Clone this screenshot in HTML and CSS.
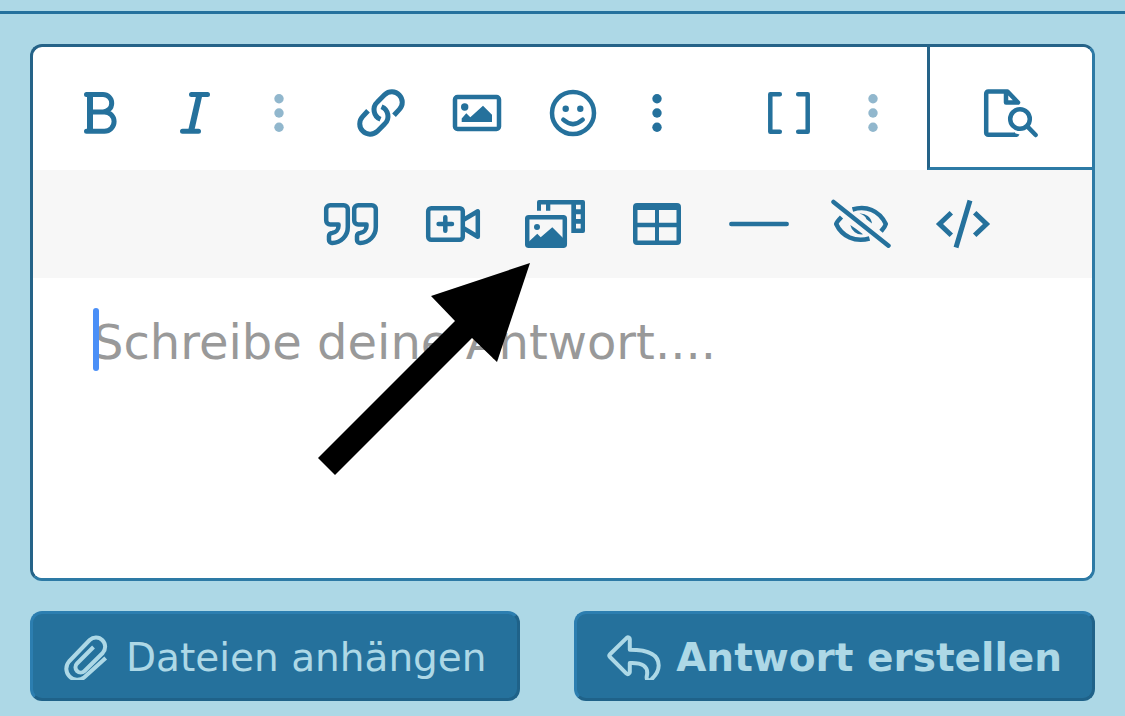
FILE: index.html
```html
<!DOCTYPE html>
<html lang="de">
<head>
    <meta charset="UTF-8">
    <title>Antwort erstellen</title>
    <link rel="stylesheet" href="styles.css">
</head>
<body>

    <form class="reply">
        <div class="editor">
            <div class="toolbar">
                <div class="toolbar__group">
                    <button type="button" class="tool" aria-label="Fett">
                        <svg class="icon icon--bold" viewBox="0 0 60 60"><path d="M17.5 11.5H34a8.7 8.7 0 0 1 0 17.4H21M34 28.9h1.4a9.7 9.7 0 0 1 0 19.4H17.5"/><path class="thick" d="M21 11.3V48.5"/></svg>
                    </button>
                    <button type="button" class="tool" aria-label="Kursiv">
                        <svg class="icon icon--bold" viewBox="0 0 60 60"><path d="M26.5 11.5H42.5M17.5 48.3H33.5"/><path class="thick" d="M34.5 11.3L26 48.5"/></svg>
                    </button>
                    <button type="button" class="tool tool--more" aria-label="Mehr Textoptionen" disabled>
                        <svg class="icon icon--dots" viewBox="0 0 24 60"><circle cx="12" cy="15.7" r="4.7"/><circle cx="12" cy="30" r="4.7"/><circle cx="12" cy="44.3" r="4.7"/></svg>
                    </button>
                </div>
                <div class="toolbar__group">
                    <button type="button" class="tool" aria-label="Link">
                        <svg class="icon icon--bold icon--butt" viewBox="0 0 60 60"><path d="M43 32.3L48.4 26.4A10.4 10.4 0 0 0 33.8 11.6L26.4 19A10.4 10.4 0 0 0 29.5 36.3"/><path d="M17 27.7L11.6 33.6A10.4 10.4 0 0 0 26.2 48.4L33.6 41A10.4 10.4 0 0 0 30.5 23.7"/></svg>
                    </button>
                    <button type="button" class="tool" aria-label="Bild">
                        <svg class="icon" viewBox="0 0 60 60"><rect x="8" y="14" width="44" height="32" rx="2.5"/><circle class="fill" cx="17.7" cy="24" r="3.7"/><path class="fill" d="M14.7 39V35.5L19.3 30.3L23.3 34.3L36 22.7L45 31.7V39z"/></svg>
                    </button>
                    <button type="button" class="tool" aria-label="Smileys">
                        <svg class="icon" viewBox="0 0 60 60"><circle cx="30" cy="30" r="21"/><circle class="fill" cx="22.7" cy="25.7" r="3.2"/><circle class="fill" cx="37.3" cy="25.7" r="3.2"/><path d="M20.3 36.7Q30 45.5 39.7 36.7"/></svg>
                    </button>
                    <button type="button" class="tool tool--more" aria-label="Mehr einfügen">
                        <svg class="icon icon--dots" viewBox="0 0 24 60"><circle cx="12" cy="15.7" r="4.7"/><circle cx="12" cy="30" r="4.7"/><circle cx="12" cy="44.3" r="4.7"/></svg>
                    </button>
                </div>
                <div class="toolbar__group toolbar__group--far">
                    <button type="button" class="tool" aria-label="BBCode">
                        <svg class="icon" viewBox="0 0 60 60"><path d="M20.8 11.3H11.3V48.7H20.8M39.2 11.3H48.7V48.7H39.2"/></svg>
                    </button>
                    <button type="button" class="tool tool--more" aria-label="Mehr" disabled>
                        <svg class="icon icon--dots" viewBox="0 0 24 60"><circle cx="12" cy="15.7" r="4.7"/><circle cx="12" cy="30" r="4.7"/><circle cx="12" cy="44.3" r="4.7"/></svg>
                    </button>
                </div>
                <button type="button" class="preview" aria-label="Vorschau">
                    <svg class="icon" viewBox="0 0 60 60"><path class="cut" d="M34 51.7H7.2a2 2 0 0 1-2-2V10.5a2 2 0 0 1 2-2H26.5L37 19.5H25V8.5"/><path class="fill" d="M33 49.4Q35.5 51 38.5 51.5Q37.5 54 35 54H33z"/><circle cx="39" cy="36" r="9.8"/><path d="M46.5 43.7L54.7 52"/></svg>
                </button>
            </div>

            <div class="toolbar-more">
                <button type="button" class="tool tool--wide" aria-label="Zitat">
                    <svg class="icon" viewBox="0 0 60 60"><path d="M26.8 15.2a4 4 0 0 0-4-4H9.2a4 4 0 0 0-4 4V26.5a4 4 0 0 0 4 4H17.5V32a7 7 0 0 1-6.5 7a3 3 0 0 0-3 3V46a3 3 0 0 0 3.2 3A15.8 15.8 0 0 0 26.8 33z"/><path d="M54.8 15.2a4 4 0 0 0-4-4H37.2a4 4 0 0 0-4 4V26.5a4 4 0 0 0 4 4H45.5V32a7 7 0 0 1-6.5 7a3 3 0 0 0-3 3V46a3 3 0 0 0 3.2 3A15.8 15.8 0 0 0 54.8 33z"/></svg>
                </button>
                <button type="button" class="tool tool--wide" aria-label="Medien">
                    <svg class="icon" viewBox="0 0 60 60"><rect x="5.2" y="14.2" width="34.6" height="31.6" rx="3"/><path d="M22.3 23.3V36.7M15.6 30H29M41 25.5L54.8 17.3V42.7L41 34.5"/></svg>
                </button>
                <button type="button" class="tool tool--wide" aria-label="Galerie">
                    <svg class="icon" viewBox="0 0 60 60"><path class="fill" fill-rule="evenodd" d="M14 6H58a2 2 0 0 1 2 2V37a2 2 0 0 1-2 2H46.3V10.5H25.3V16.7H21V10.5H16V16.7H12V8a2 2 0 0 1 2-2zM51 10.7V15.3H55.7V10.7zM51 20.3V25H55.7V20.3zM51 29.7V34.5H55.7V29.7z"/><rect x="2.2" y="23.2" width="37.6" height="28.6" rx="1.5"/><circle class="fill" cx="12" cy="33" r="3"/><path class="fill" d="M4 47.5L12.3 39.7L15.7 43.3L27.3 33.3L39 45V53H3z"/></svg>
                </button>
                <button type="button" class="tool tool--wide" aria-label="Tabelle">
                    <svg class="icon" viewBox="0 0 60 60"><path class="fill" fill-rule="evenodd" d="M10 9H50a4 4 0 0 1 4 4V47a4 4 0 0 1-4 4H10a4 4 0 0 1-4-4V13a4 4 0 0 1 4-4zM10.5 16V28.7H28V16zM32 16V28.7H49.5V16zM10.5 33.3V46.5H28V33.3zM32 33.3V46.5H49.5V33.3z"/></svg>
                </button>
                <button type="button" class="tool tool--wide" aria-label="Trennlinie">
                    <svg class="icon" viewBox="0 0 60 60"><path d="M2.3 30H57.7"/></svg>
                </button>
                <button type="button" class="tool tool--wide" aria-label="Spoiler">
                    <svg class="icon icon--butt" viewBox="0 0 60 60"><path d="M21.5 15.5C35 11.5 48 16 54.8 30C54 33 52 35 50 37.3M10.5 23C8 25.5 6 27.5 5.2 30C11 42.5 24 48.5 38.5 44.5"/><path class="fill" d="M28.5 19.5A11.5 11.5 0 0 1 41 29.5L35.5 25.3Q34 21 28.5 19.5zM19.3 31A11.5 11.5 0 0 0 32 40.3L24.8 34.8z"/><path class="round" d="M2.5 8L57.5 51.7"/></svg>
                </button>
                <button type="button" class="tool tool--wide" aria-label="Code">
                    <svg class="icon icon--bold icon--butt" viewBox="0 0 60 60"><path class="angle" d="M18.3 18.8L6.5 30L18.3 41.2M41.7 18.8L53.5 30L41.7 41.2M37 6.5L23 53.5"/></svg>
                </button>
            </div>

            <div class="editor__body">
                <textarea class="editor__input" placeholder="Schreibe deine Antwort...." aria-label="Antwort"></textarea>
                <span class="caret"></span>
            </div>

            <svg class="pointer" viewBox="0 0 212 212"><path d="M212 0L113 33L137 58L0 195L17 212L154 75L179 99z"/></svg>
        </div>

        <div class="actions">
            <button type="button" class="btn">
                <svg class="btn__icon btn__icon--clip" viewBox="0 0 48 45"><path d="M42.7 23L21.3 42.2A11 11 0 0 1 6 26.5L26.7 5A9.2 9.2 0 0 1 39.7 18L21.5 36A5.3 5.3 0 0 1 14 28.5L30.5 12"/></svg>
                Dateien anhängen
            </button>
            <button type="submit" class="btn btn--primary">
                <svg class="btn__icon btn__icon--reply" viewBox="0 0 54 45"><path d="M20 2.6L3 19.2a2 2 0 0 0 0 2.8L19.5 38.6a2 2 0 0 0 3.3-1.4V28C35 27.5 42 31 39.8 41C39 45 41.5 46.5 44.5 44.3C48 41 51.7 36 51.7 30.5C51.7 19 41 14.8 22.8 14.8V4a1.8 1.8 0 0 0-2.8-1.4z"/></svg>
                Antwort erstellen
            </button>
        </div>
    </form>

</body>
</html>
```
FILE: styles.css
```css
*{
    box-sizing: border-box;
}
body{
    margin: 11px 0 0;
    border-top: 3px solid #24719d;
    background: #add8e6;
    font-family: "DejaVu Sans", Verdana, sans-serif;
}
button{
    margin: 0;
    font-family: inherit;
    cursor: pointer;
}
.reply{
    padding: 30px 30px 15px;
}

/* editor */
.editor{
    position: relative;
    border: 3px solid;
    border-color: #256388 #2d7aa5 #2d7aa5 #256388;
    border-radius: 12px;
    background: #fff;
}
.toolbar{
    display: flex;
    height: 123px;
    padding-left: 18px;
}
.toolbar__group{
    display: flex;
    margin-right: 18px;
    padding-top: 12px;
}
.toolbar__group--far{
    margin-left: 30px;
}
.toolbar-more{
    display: flex;
    justify-content: flex-end;
    padding-right: 78px;
    background: #f7f7f7;
}
.tool{
    display: flex;
    align-items: center;
    justify-content: center;
    width: 96px;
    height: 108px;
    padding: 0;
    border: 0;
    background: none;
    color: #25719c;
}
.tool--more{
    width: 72px;
}
.tool--wide{
    width: 102px;
}
.tool:disabled{
    opacity: .5;
}
.preview{
    display: flex;
    justify-content: center;
    width: 165px;
    margin-left: auto;
    padding: 36px 0 0;
    border: 0 solid;
    border-width: 0 0 3px 3px;
    border-color: #2d7aa5 #2d7aa5 #2d7aa5 #256388;
    border-top-right-radius: 9px;
    background: #fff;
}

/* icons */
.icon{
    width: 60px;
    height: 60px;
    fill: none;
    stroke: #25719c;
    stroke-width: 4.5;
    stroke-linecap: round;
    stroke-linejoin: round;
}
.icon--bold{
    stroke-width: 5;
}
.icon .thick{
    stroke-width: 6;
    stroke-linecap: butt;
}
.icon .angle{
    stroke-linejoin: miter;
}
.icon .fill{
    fill: #25719c;
    stroke: none;
}
.icon .cut{
    stroke-linecap: butt;
}
.icon--butt{
    stroke-linecap: butt;
}
.icon--butt .round{
    stroke-linecap: round;
}
.icon--dots{
    width: 24px;
    fill: #25719c;
    stroke: none;
}

/* text area */
.editor__body{
    position: relative;
}
.editor__input{
    display: block;
    width: 100%;
    height: 300px;
    padding: 36px 60px;
    border: 0;
    border-radius: 9px;
    outline: 0;
    background: #fff;
    font: 48px/56px "DejaVu Sans", Verdana, sans-serif;
    resize: none;
}
.editor__input::placeholder{
    color: #999;
    opacity: 1;
}
.caret{
    position: absolute;
    top: 30px;
    left: 60px;
    width: 6px;
    height: 63px;
    border-radius: 3px;
    background: #4a8ff7;
}
.pointer{
    position: absolute;
    top: 216px;
    left: 285px;
    width: 212px;
    height: 212px;
    pointer-events: none;
}

/* buttons */
.actions{
    display: flex;
    justify-content: space-between;
    margin-top: 30px;
}
.btn{
    display: flex;
    align-items: center;
    gap: 15px;
    height: 90px;
    padding: 2px 30px 0;
    border: 3px solid;
    border-color: #2c7eb0 #1f6289 #1f6289 #2c7eb0;
    border-radius: 12px;
    background: #25719c;
    color: #add8e6;
    font-size: 39px;
    white-space: nowrap;
}
.btn--primary{
    font-weight: bold;
}
.btn__icon{
    height: 45px;
    fill: none;
    stroke: #add8e6;
    stroke-width: 4;
    stroke-linejoin: round;
}
.btn__icon--clip{
    width: 48px;
}
.btn__icon--reply{
    width: 54px;
}
```
